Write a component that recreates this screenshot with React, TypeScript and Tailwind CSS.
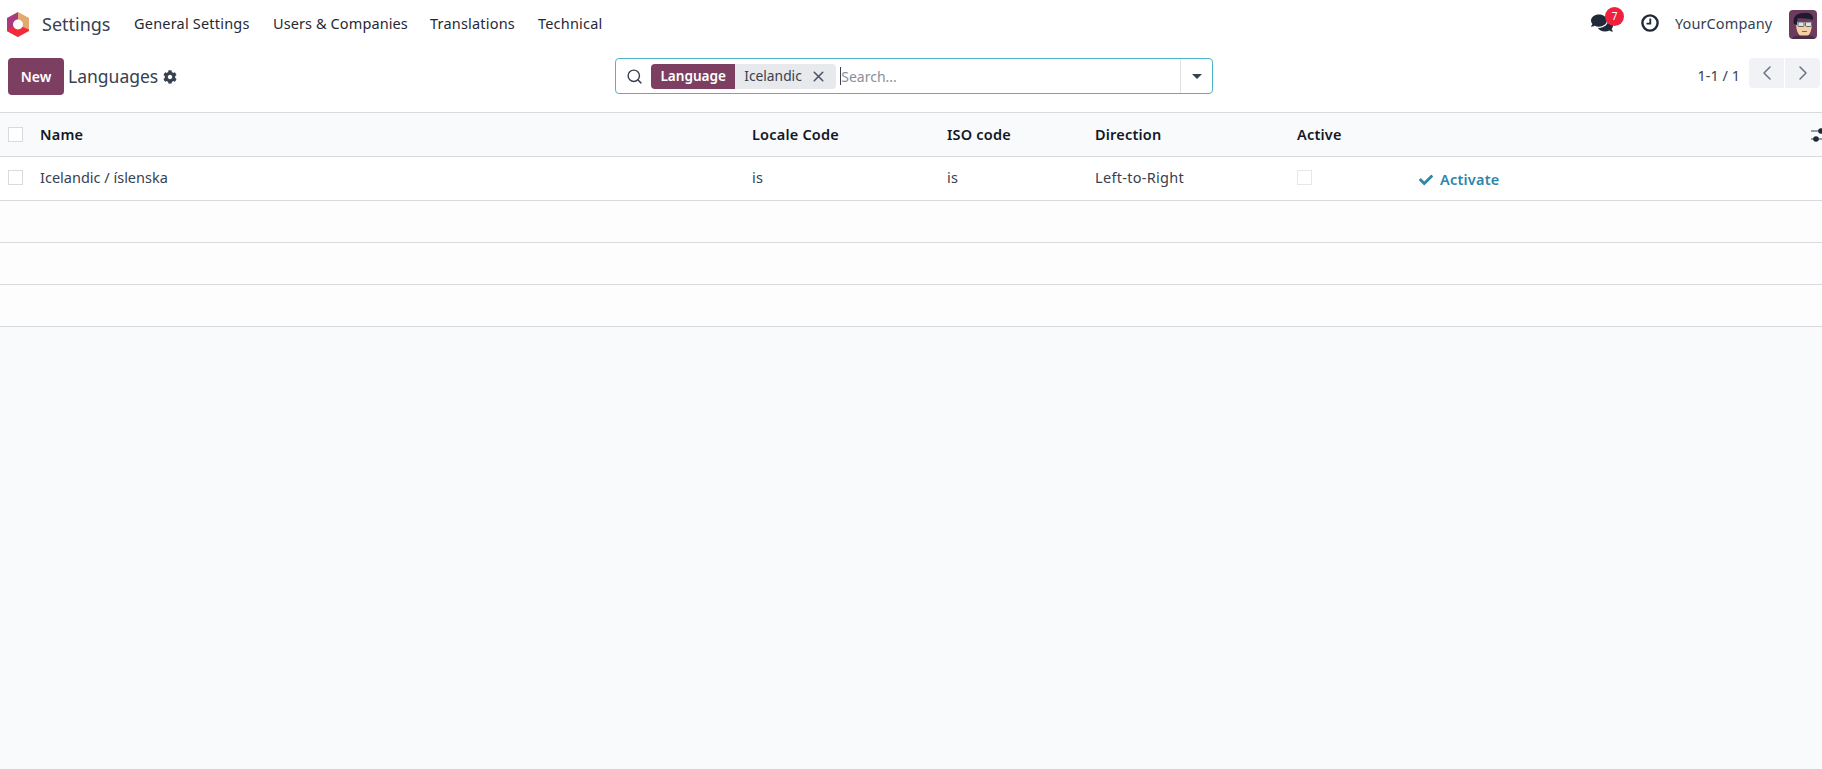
import { ChevronLeft, ChevronRight, Search, X } from "lucide-react";
import { FaCheck, FaCog, FaComments } from "react-icons/fa";

function Logo() {
  return (
    <svg width="22" height="25" viewBox="0 0 22 25">
      <path d="M11 0 L0 6 V19 L11 25 Z" fill="#a93a80" />
      <path d="M11 0 L22 6 V19 L11 12.5 Z" fill="#e3a96e" />
      <path d="M0 17.5 L11 13 L22 17.5 V19 L11 25 L0 19 Z" fill="#f22a3a" />
      <circle cx="11" cy="12.5" r="5" fill="#ffffff" />
    </svg>
  );
}

function Avatar() {
  return (
    <svg width="28" height="29" viewBox="0 0 28 29" className="rounded-[4px]">
      <rect width="28" height="29" fill="#6d3b5e" />
      <path d="M7 12 C7 22 10 27 15 27 C20 27 23 22 23 12 Z" fill="#f4cfa4" />
      <path d="M3 29 C4 26 8 25 10 25.5 L19 25.5 C23 25 25 27 26 29 Z" fill="#4b2c48" />
      <path d="M5 14 C3 6 9 2.5 15 3 C21 2 25 5 24 10 C20 8 13 9 9 8 C8 10 8 12 8 15 Z" fill="#1f1b2e" />
      <rect x="9" y="12" width="6" height="4.5" rx="1" fill="#dfe3e6" stroke="#5a6470" strokeWidth="1" />
      <rect x="16.5" y="12" width="6" height="4.5" rx="1" fill="#dfe3e6" stroke="#5a6470" strokeWidth="1" />
      <path d="M13 21.5 H18" stroke="#a4573f" strokeWidth="1" />
    </svg>
  );
}

function Box({ light }: { light?: boolean }) {
  return (
    <span
      className={`block w-[15px] h-[15px] border bg-white ${light ? "border-[#e5e7ea]" : "border-[#d8dadd]"}`}
    />
  );
}

const grid = "grid grid-cols-[32px_712px_195px_148px_202px_122px_1fr] items-center pl-2";

export default function App() {
  return (
    <div
      className="w-[1822px] h-[769px] overflow-hidden flex flex-col bg-[#f9fafb] text-[#374151] text-[14.5px] tracking-[0.2px]"
      style={{ fontFamily: '"Noto Sans", sans-serif' }}
    >
      {/* navbar */}
      <nav className="h-[46px] pt-[2px] bg-white flex items-center shrink-0">
        <div className="ml-[7px] w-[22px] flex">
          <Logo />
        </div>
        <span className="ml-[13px] w-[92px] text-[18px] tracking-normal text-[#374151]">Settings</span>
        <a className="w-[139px] text-[#1f2937]">General Settings</a>
        <a className="w-[157px] text-[#1f2937] tracking-[0.1px]">Users &amp; Companies</a>
        <a className="w-[108px] text-[#1f2937]">Translations</a>
        <a className="text-[#1f2937]">Technical</a>
        <div className="ml-auto flex items-center">
          <div className="relative w-[23px] h-[20px] mr-[27px]">
            <FaComments size={22} className="text-[#1f2937] -mt-[2px]" />
            <span className="absolute -top-[7px] left-[14px] w-[19px] h-[19px] rounded-full bg-[#f0213c] text-white text-[10px] tracking-normal flex items-center justify-center">
              7
            </span>
          </div>
          <svg width="18" height="18" viewBox="0 0 18 18" className="mr-[16px] -mt-[2px]">
            <circle cx="9" cy="9" r="7.6" fill="none" stroke="#1f2937" strokeWidth="2.4" />
            <path d="M9.3 4.5 V9.6 H5.5" fill="none" stroke="#1f2937" strokeWidth="1.8" />
          </svg>
          <span className="w-[114px] text-[#374151] tracking-[0.1px]">YourCompany</span>
          <div className="flex mr-[5px]">
            <Avatar />
          </div>
        </div>
      </nav>

      {/* control panel */}
      <div className="h-[66px] bg-white shrink-0 flex items-start pt-[12px] relative">
        <button className="ml-2 w-[56px] h-[37px] rounded-[4px] bg-[#7c3f62] text-white font-semibold text-[14px] tracking-normal">
          New
        </button>
        <span className="ml-[4px] mt-[6px] text-[17.5px] tracking-normal text-[#374151] leading-[24px]">Languages</span>
        <FaCog size={14} className="ml-[5px] mt-[12px] text-[#374151]" />

        <div className="ml-[438px] w-[598px] h-[36px] border border-[#4fb3c8] rounded-[4px] bg-white flex items-center text-[14px] tracking-normal">
          <Search size={17} strokeWidth={2} className="ml-[10px] text-[#374151]" />
          <div className="ml-[8px] h-[25px] flex rounded-[4px] overflow-hidden w-[185px]">
            <span className="w-[84px] bg-[#7c3f62] text-white font-semibold text-[13.6px] flex items-center justify-center">
              Language
            </span>
            <span className="flex-1 bg-[#e7e9ed] flex items-center pl-[9px] text-[13.8px] text-[#374151]">
              Icelandic
              <X size={17} strokeWidth={2.2} className="ml-[8px] text-[#4b5563]" />
            </span>
          </div>
          <span className="ml-[4px] w-px h-[18px] bg-[#374151]" />
          <span className="text-[#8a9099] flex-1">Search...</span>
          <div className="w-[32px] h-full border-l border-[#dee2e6] flex items-center justify-center">
            <span className="w-0 h-0 border-x-[5px] border-x-transparent border-t-[5px] border-t-[#374151]" />
          </div>
        </div>

        <span className="ml-auto mt-[7px] text-[#374151] tracking-normal">1-1 / 1</span>
        <div className="ml-[9px] mr-[2px] flex h-[30px] w-[71px] rounded-[4px] overflow-hidden gap-px">
          <span className="flex-1 bg-[#f1f2f5] flex items-center justify-center text-[#6b7280]">
            <ChevronLeft size={24} strokeWidth={1.5} />
          </span>
          <span className="flex-1 bg-[#f1f2f5] flex items-center justify-center text-[#6b7280]">
            <ChevronRight size={24} strokeWidth={1.5} />
          </span>
        </div>
      </div>

      {/* list */}
      <div className={`${grid} h-[45px] shrink-0 bg-[#f9fafb] border-y border-[#d8dadd] font-semibold text-[#111827] relative`}>
        <Box />
        <span>Name</span>
        <span>Locale Code</span>
        <span>ISO code</span>
        <span>Direction</span>
        <span>Active</span>
        <span />
        <svg width="11" height="16" viewBox="0 0 11 16" className="absolute right-0 top-[14px]">
          <path d="M0 4 H11 M0 12 H11" stroke="#374151" strokeWidth="1.2" />
          <circle cx="10" cy="4" r="2.8" fill="#1f2937" />
          <circle cx="5" cy="12" r="2.8" fill="#1f2937" />
        </svg>
      </div>
      <div className={`${grid} h-[44px] pb-[2px] shrink-0 bg-white border-b border-[#d8dadd] text-[#374151]`}>
        <Box />
        <span className="tracking-normal">Icelandic / íslenska</span>
        <span>is</span>
        <span>is</span>
        <span className="tracking-[0.3px]">Left-to-Right</span>
        <Box light />
        <span className="flex items-center text-[#2f86a8] font-semibold mt-[5px]">
          <FaCheck size={14} className="mr-[7px]" />
          Activate
        </span>
      </div>
      <div className="h-[42px] bg-[#fdfdfe] border-b border-[#d8dadd] shrink-0" />
      <div className="h-[42px] bg-[#fdfdfe] border-b border-[#d8dadd] shrink-0" />
      <div className="h-[42px] bg-[#fdfdfe] border-b border-[#d8dadd] shrink-0" />
    </div>
  );
}
